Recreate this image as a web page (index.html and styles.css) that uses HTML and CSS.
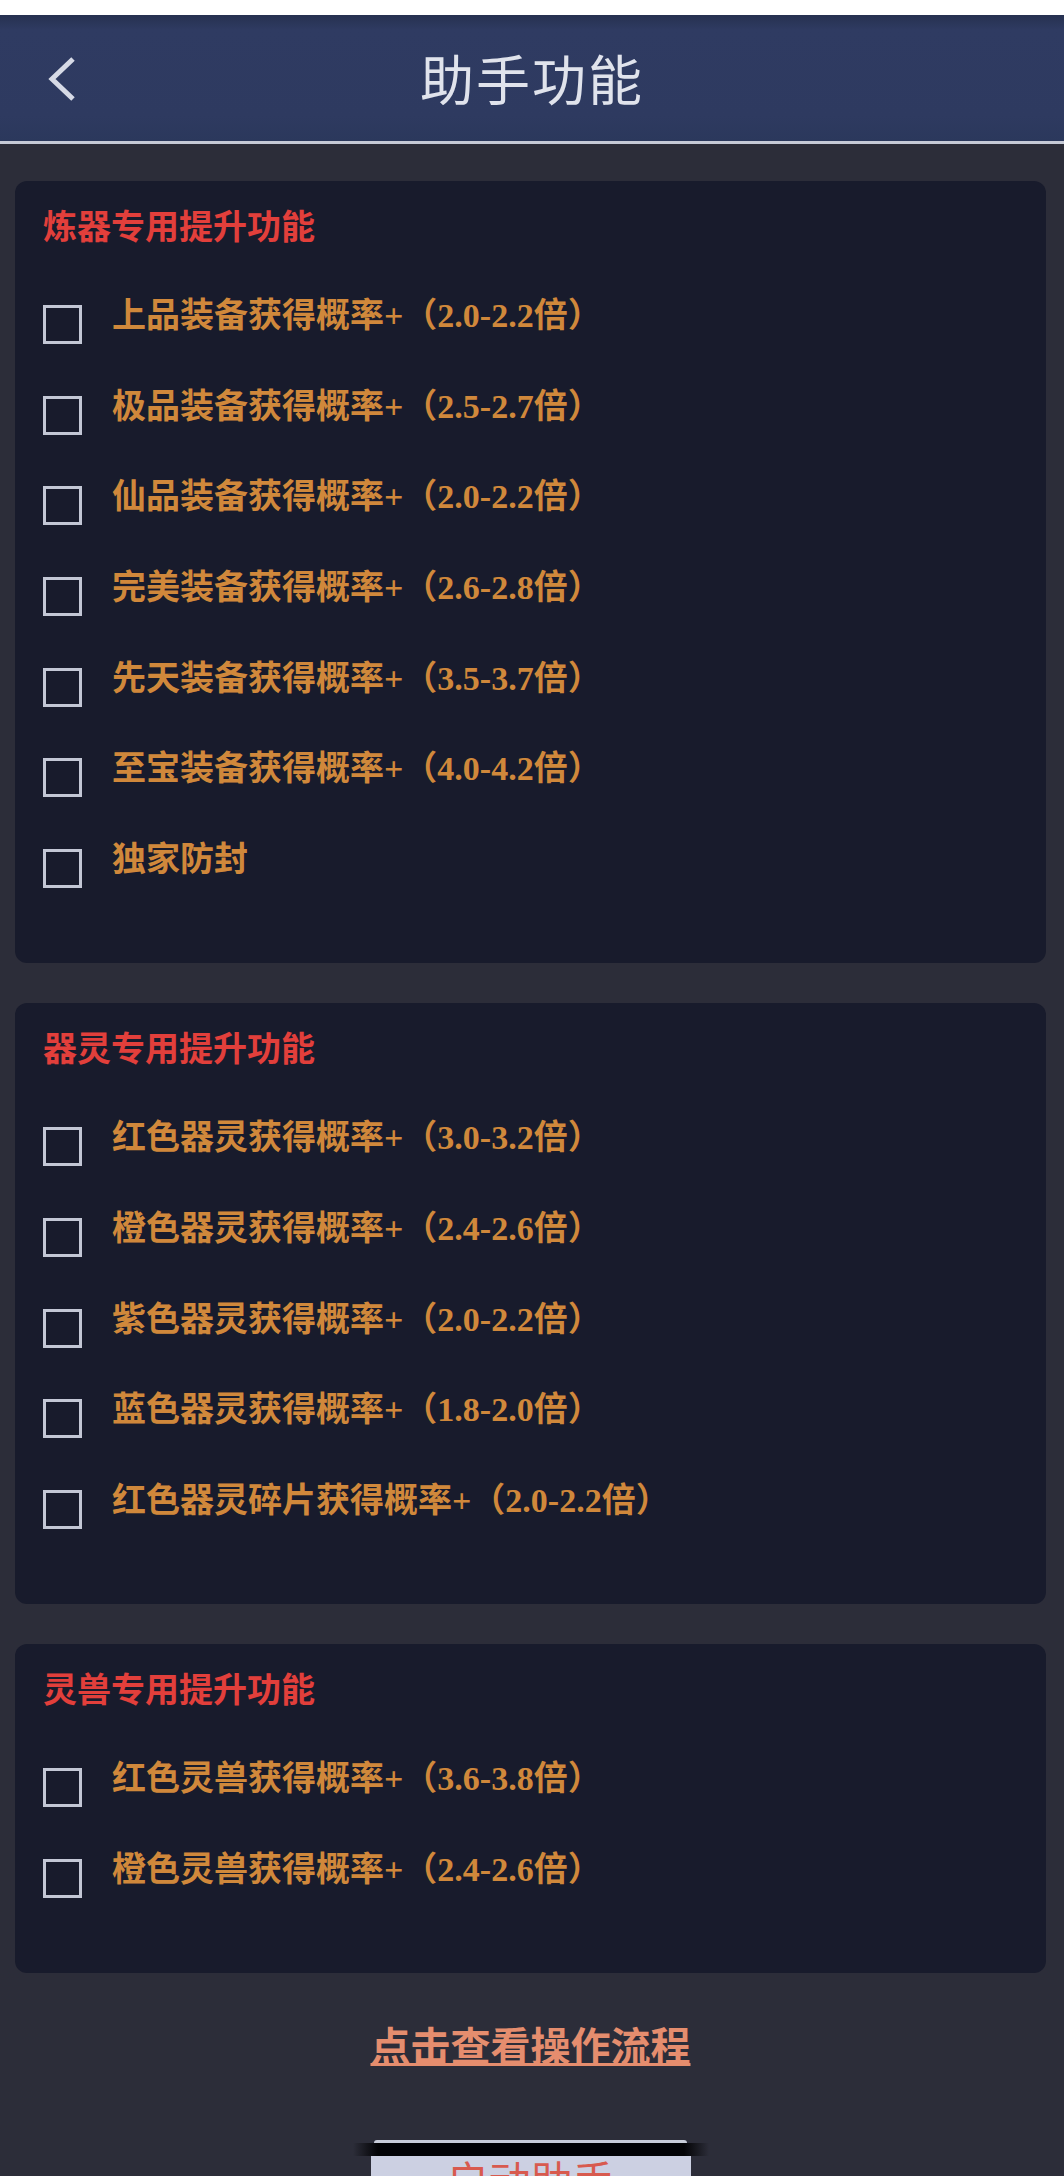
FILE: index.html
```html
<!DOCTYPE html>
<html lang="zh-CN">
<head>
    <meta charset="UTF-8">
    <meta name="viewport" content="width=device-width, initial-scale=1.0">
    <title>助手功能</title>
    <link rel="stylesheet" href="styles.css">
</head>
<body>
    <div class="status-strip"></div>
    <header class="topbar">
        <a class="back-btn" href="#">
            <svg width="28" height="44" viewBox="0 0 28 44">
                <polyline points="25,2 4,22 25,42" fill="none" stroke="#d6dae6" stroke-width="5"/>
            </svg>
        </a>
        <h1 class="topbar-title">助手功能</h1>
        <span></span>
    </header>

    <main class="content">
        <section class="card">
            <h2 class="card-title">炼器专用提升功能</h2>
            <label class="option"><span class="box"></span><span class="option-text">上品装备获得概率+（2.0-2.2倍）</span></label>
            <label class="option"><span class="box"></span><span class="option-text">极品装备获得概率+（2.5-2.7倍）</span></label>
            <label class="option"><span class="box"></span><span class="option-text">仙品装备获得概率+（2.0-2.2倍）</span></label>
            <label class="option"><span class="box"></span><span class="option-text">完美装备获得概率+（2.6-2.8倍）</span></label>
            <label class="option"><span class="box"></span><span class="option-text">先天装备获得概率+（3.5-3.7倍）</span></label>
            <label class="option"><span class="box"></span><span class="option-text">至宝装备获得概率+（4.0-4.2倍）</span></label>
            <label class="option"><span class="box"></span><span class="option-text">独家防封</span></label>
        </section>

        <section class="card">
            <h2 class="card-title">器灵专用提升功能</h2>
            <label class="option"><span class="box"></span><span class="option-text">红色器灵获得概率+（3.0-3.2倍）</span></label>
            <label class="option"><span class="box"></span><span class="option-text">橙色器灵获得概率+（2.4-2.6倍）</span></label>
            <label class="option"><span class="box"></span><span class="option-text">紫色器灵获得概率+（2.0-2.2倍）</span></label>
            <label class="option"><span class="box"></span><span class="option-text">蓝色器灵获得概率+（1.8-2.0倍）</span></label>
            <label class="option"><span class="box"></span><span class="option-text">红色器灵碎片获得概率+（2.0-2.2倍）</span></label>
        </section>

        <section class="card">
            <h2 class="card-title">灵兽专用提升功能</h2>
            <label class="option"><span class="box"></span><span class="option-text">红色灵兽获得概率+（3.6-3.8倍）</span></label>
            <label class="option"><span class="box"></span><span class="option-text">橙色灵兽获得概率+（2.4-2.6倍）</span></label>
        </section>

        <a class="guide-link" href="#">点击查看操作流程</a>

        <div class="start-area">
            <div class="start-top"></div>
            <div class="start-band"></div>
            <button class="start-btn" type="button">启动助手</button>
        </div>
    </main>
</body>
</html>
```

FILE: styles.css
```css
body {
    margin: 0;
    background-color: #2c2d39;
    font-family: "Noto Sans CJK SC", "Noto Sans", sans-serif;
}
.status-strip {
    height: 15px;
    background-color: #fff;
}
.topbar {
    height: 126px;
    display: grid;
    grid-template-columns: 1fr auto 1fr;
    align-items: center;
    background: linear-gradient(#263150, #2f3b62 12%, #2e3a60 80%, #2b385c);
    border-bottom: 3px solid #c6cad6;
}
.back-btn {
    display: flex;
    padding-left: 48px;
    margin-top: 2px;
}
.topbar-title {
    margin: 0;
    font-size: 54px;
    font-weight: 400;
    line-height: 60px;
    color: #e0e3ec;
    letter-spacing: 2px;
}
.content {
    padding: 37px 18px 0 15px;
}
.card {
    background-color: #181b2c;
    border-radius: 12px;
    padding: 24px 28px 58px;
}
.card + .card {
    margin-top: 40px;
}
.card-title {
    margin: 0 0 26px;
    font-size: 34px;
    line-height: 40px;
    font-weight: 700;
    color: #e23f3b;
}
.option {
    display: flex;
    align-items: center;
    gap: 30px;
    height: 90.6px;
}
.box {
    width: 39px;
    height: 39px;
    box-sizing: border-box;
    border: 3px solid #c3c7d5;
    margin-top: 17px;
    flex-shrink: 0;
}
.option-text {
    font-family: "Liberation Serif", "Noto Sans CJK SC", serif;
    font-size: 34px;
    line-height: 40px;
    font-weight: 700;
    color: #d0883b;
}
.guide-link {
    display: block;
    width: max-content;
    margin: 47px auto 0;
    font-size: 40px;
    line-height: 48px;
    font-weight: 700;
    color: #e58d6e;
    text-decoration: underline;
    text-decoration-thickness: 3px;
}
.start-area {
    margin-top: 72px;
    display: flex;
    flex-direction: column;
    align-items: center;
}
.start-top {
    width: 313px;
    height: 3px;
    background-color: #c9cdd9;
    border-radius: 3px 3px 0 0;
}
.start-band {
    width: 356px;
    height: 13px;
    background: linear-gradient(to right, rgba(0, 0, 0, 0), #030305 7%, #030305 93%, rgba(0, 0, 0, 0));
}
.start-btn {
    width: 320px;
    height: 23px;
    overflow: hidden;
    padding: 2px 0 0;
    border: none;
    background-color: #ccd0e2;
    font-family: "Noto Sans CJK SC", sans-serif;
    font-size: 42px;
    line-height: 42px;
    color: #d85a4e;
    text-align: center;
    vertical-align: top;
}
```
